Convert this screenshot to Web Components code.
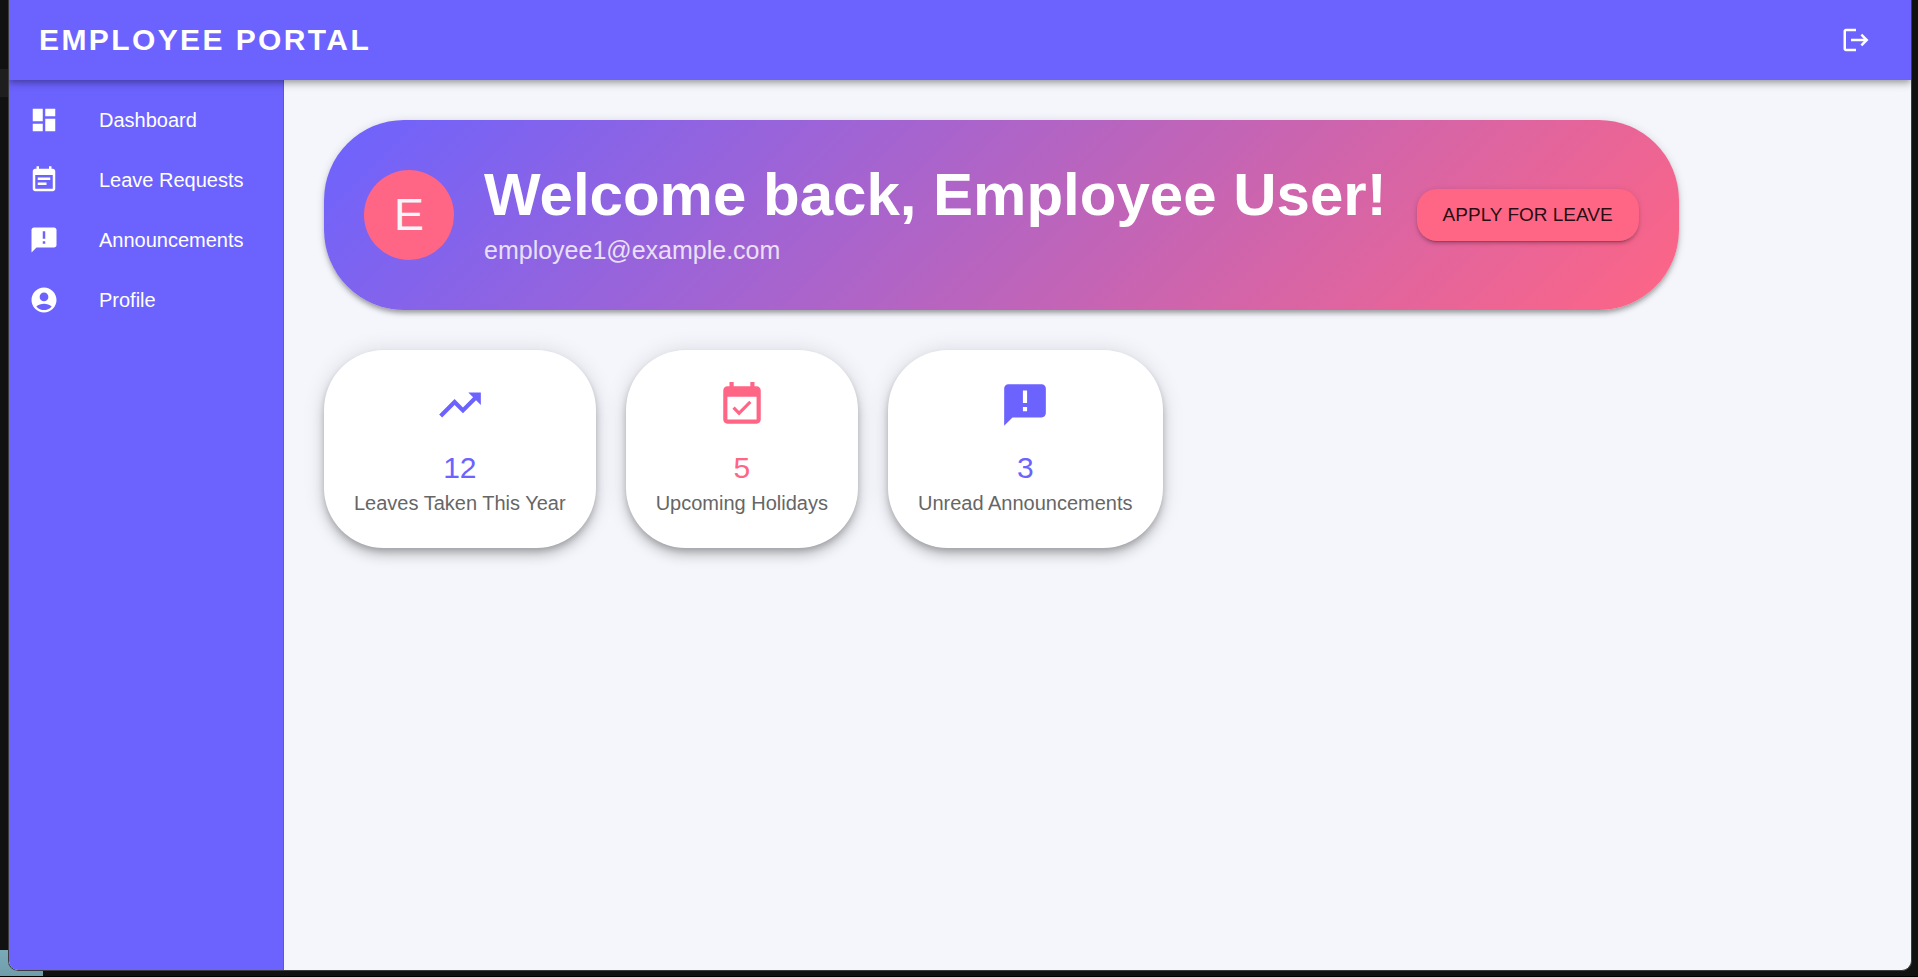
<!DOCTYPE html>
<html lang="en">
<head>
<meta charset="utf-8">
<meta name="viewport" content="width=device-width, initial-scale=1">
<title>Employee Portal</title>
<style>
  html, body { height: 100%; margin: 0; }
  body {
    --primary: #6c63ff;
    --accent: #ff6584;
    --surface: #f4f6fb;
    background: #111;
    font-family: "Liberation Sans", Arial, sans-serif;
    font-size: 20px;
    line-height: 30px;
  }
</style>
</head>
<body>
<portal-window>
  <portal-header slot="header">EMPLOYEE PORTAL</portal-header>
  <portal-nav slot="nav">
    <nav-item icon="dashboard" href="#dashboard">Dashboard</nav-item>
    <nav-item icon="event-note" href="#leave">Leave Requests</nav-item>
    <nav-item icon="announcement" href="#announcements">Announcements</nav-item>
    <nav-item icon="account" href="#profile">Profile</nav-item>
  </portal-nav>
  <welcome-banner>
    <span slot="initial">E</span>
    <span slot="title">Welcome back, Employee User!</span>
    <span slot="email">employee1@example.com</span>
    <span slot="action">APPLY FOR LEAVE</span>
  </welcome-banner>
  <stat-list>
    <stat-card icon="trending-up" value="12">Leaves Taken This Year</stat-card>
    <stat-card icon="event-available" value="5" tone="accent">Upcoming Holidays</stat-card>
    <stat-card icon="announcement" value="3">Unread Announcements</stat-card>
  </stat-list>
</portal-window>

<script>
const ICONS = {
  "dashboard": "M3 13h8V3H3v10zm0 8h8v-6H3v6zm10 0h8V11h-8v10zm0-18v6h8V3h-8z",
  "event-note": "M17 10H7v2h10v-2zm2-7h-1V1h-2v2H8V1H6v2H5c-1.11 0-1.99.9-1.99 2L3 19c0 1.1.89 2 2 2h14c1.1 0 2-.9 2-2V5c0-1.1-.9-2-2-2zm0 16H5V8h14v11zm-5-5H7v2h7v-2z",
  "announcement": "M20 2H4c-1.1 0-1.99.9-1.99 2L2 22l4-4h14c1.1 0 2-.9 2-2V4c0-1.1-.9-2-2-2zm-7 9h-2V5h2v6zm0 4h-2v-2h2v2z",
  "account": "M12 2C6.48 2 2 6.48 2 12s4.48 10 10 10 10-4.48 10-10S17.52 2 12 2zm0 4c1.93 0 3.5 1.57 3.5 3.5S13.93 13 12 13s-3.5-1.57-3.5-3.5S10.07 6 12 6zm0 14c-2.03 0-4.43-.82-6.14-2.88C7.55 15.8 9.68 15 12 15s4.45.8 6.14 2.12C16.43 19.18 14.03 20 12 20z",
  "trending-up": "m16 6 2.29 2.29-4.88 4.88-4-4L2 16.59 3.41 18l6-6 4 4 6.3-6.29L22 12V6z",
  "event-available": "M16.53 11.06 15.47 10l-4.88 4.88-2.12-2.12-1.06 1.06L10.59 17l5.94-5.94zM19 3h-1V1h-2v2H8V1H6v2H5c-1.11 0-1.99.9-1.99 2L3 19c0 1.1.89 2 2 2h14c1.1 0 2-.9 2-2V5c0-1.1-.9-2-2-2zm0 16H5V8h14v11z",
  "logout": "m17 7-1.41 1.41L18.17 11H8v2h10.17l-2.58 2.58L17 17l5-5zM4 5h8V3H4c-1.1 0-2 .9-2 2v14c0 1.1.9 2 2 2h8v-2H4V5z"
};

function define(name, render) {
  customElements.define(name, class extends HTMLElement {
    constructor() {
      super();
      this.attachShadow({ mode: "open" });
    }
    connectedCallback() {
      this.shadowRoot.innerHTML = render(this);
    }
  });
}

define("md-icon", el => `
  <style>
    :host { display: block; flex: none; width: 30px; height: 30px; }
    svg { display: block; width: 100%; height: 100%; fill: currentColor; }
  </style>
  <svg viewBox="0 0 24 24" aria-hidden="true"><path d="${ICONS[el.getAttribute("name")]}"/></svg>`);

/* The browser frame, with the strip of dark desktop that shows around it. */
define("portal-window", () => `
  <style>
    :host {
      display: flex;
      box-sizing: border-box;
      min-height: 100vh;
      padding: 0 6px 5px 8px;
      border-bottom: 1px solid #000;
      background:
        linear-gradient(#7aa9b8, #6f9dab) left bottom / 43px 26px no-repeat,
        linear-gradient(#1e1e1e, #1e1e1e) left 69px / 8px 28px no-repeat,
        #111;
    }
    .frame {
      flex: 1;
      display: flex;
      flex-direction: column;
      min-width: 0;
      overflow: hidden;
      border: solid #3c3c3c;
      border-width: 0 1px 1px;
      border-radius: 0 0 10px 10px;
      background: var(--surface);
    }
    .body { flex: 1; display: flex; }
    main {
      flex: 1;
      display: flex;
      flex-direction: column;
      align-items: flex-start;
      gap: 40px;
      min-width: 0;
      padding: 40px;
    }
  </style>
  <div class="frame">
    <slot name="header"></slot>
    <div class="body">
      <slot name="nav"></slot>
      <main><slot></slot></main>
    </div>
  </div>`);

define("portal-header", () => `
  <style>
    :host { display: block; position: relative; z-index: 1; }
    header {
      display: flex;
      align-items: center;
      justify-content: space-between;
      height: 80px;
      padding: 0 30px;
      color: #fff;
      background: var(--primary);
      box-shadow: 0 2px 5px -1px rgba(0,0,0,.2), 0 5px 6px rgba(0,0,0,.14), 0 1px 12px rgba(0,0,0,.12);
    }
    h1 { margin: 0; font-size: 30px; line-height: 40px; letter-spacing: .08em; }
    button { padding: 10px; border: 0; color: inherit; background: none; cursor: pointer; }
  </style>
  <header>
    <h1><slot></slot></h1>
    <button type="button" aria-label="Log out"><md-icon name="logout"></md-icon></button>
  </header>`);

define("portal-nav", () => `
  <style>
    :host { display: flex; flex: none; width: 275px; }
    nav {
      flex: 1;
      padding: 10px 0;
      border-right: 1px solid #5d55dd;
      color: #fff;
      background: var(--primary);
    }
  </style>
  <nav><slot></slot></nav>`);

define("nav-item", el => `
  <style>
    :host { display: block; }
    a {
      display: flex;
      align-items: center;
      gap: 40px;
      padding: 15px 20px;
      color: inherit;
      text-decoration: none;
    }
  </style>
  <a href="${el.getAttribute("href")}"><md-icon name="${el.getAttribute("icon")}"></md-icon><slot></slot></a>`);

define("welcome-banner", () => `
  <style>
    :host { display: block; max-width: 100%; }
    section {
      display: flex;
      align-items: center;
      gap: 30px;
      padding: 40px;
      border-radius: 80px;
      color: #fff;
      background: linear-gradient(135deg, var(--primary), var(--accent));
      box-shadow: 0 4px 4px -2px rgba(0,0,0,.2), 0 4px 5px rgba(0,0,0,.14), 0 1px 10px rgba(0,0,0,.12);
    }
    .avatar {
      flex: none;
      display: grid;
      place-items: center;
      width: 90px;
      height: 90px;
      border-radius: 50%;
      font-size: 45px;
      color: var(--surface);
      background: var(--accent);
    }
    h2 { margin: 0; font-size: 60px; line-height: 70px; }
    p { margin: 0; font-size: 25px; line-height: 40px; opacity: .8; }
    button {
      flex: none;
      padding: 10px 26px;
      border: 0;
      border-radius: 20px;
      font: 19px/32px "Liberation Sans", Arial, sans-serif;
      color: rgba(0,0,0,.87);
      background: var(--accent);
      box-shadow: 0 4px 1px -3px rgba(0,0,0,.2), 0 3px 3px rgba(0,0,0,.14), 0 1px 6px rgba(0,0,0,.12);
      cursor: pointer;
    }
  </style>
  <section>
    <div class="avatar"><slot name="initial"></slot></div>
    <div>
      <h2><slot name="title"></slot></h2>
      <p><slot name="email"></slot></p>
    </div>
    <button type="button"><slot name="action"></slot></button>
  </section>`);

define("stat-list", () => `
  <style>
    :host { display: flex; flex-wrap: wrap; gap: 30px; }
  </style>
  <slot></slot>`);

define("stat-card", el => `
  <style>
    :host {
      display: flex;
      flex-direction: column;
      align-items: center;
      padding: 30px;
      border-radius: 60px;
      color: var(--primary);
      background: #fff;
      box-shadow: 0 4px 6px -1px rgba(0,0,0,.2), 0 8px 12px rgba(0,0,0,.14), 0 1px 22px rgba(0,0,0,.12);
    }
    :host([tone="accent"]) { color: var(--accent); }
    md-icon { width: 50px; height: 50px; margin-bottom: 18px; }
    strong { font-size: 30px; font-weight: 400; line-height: 40px; }
    span { color: #666; }
  </style>
  <md-icon name="${el.getAttribute("icon")}"></md-icon>
  <strong>${el.getAttribute("value")}</strong>
  <span><slot></slot></span>`);
</script>
</body>
</html>
